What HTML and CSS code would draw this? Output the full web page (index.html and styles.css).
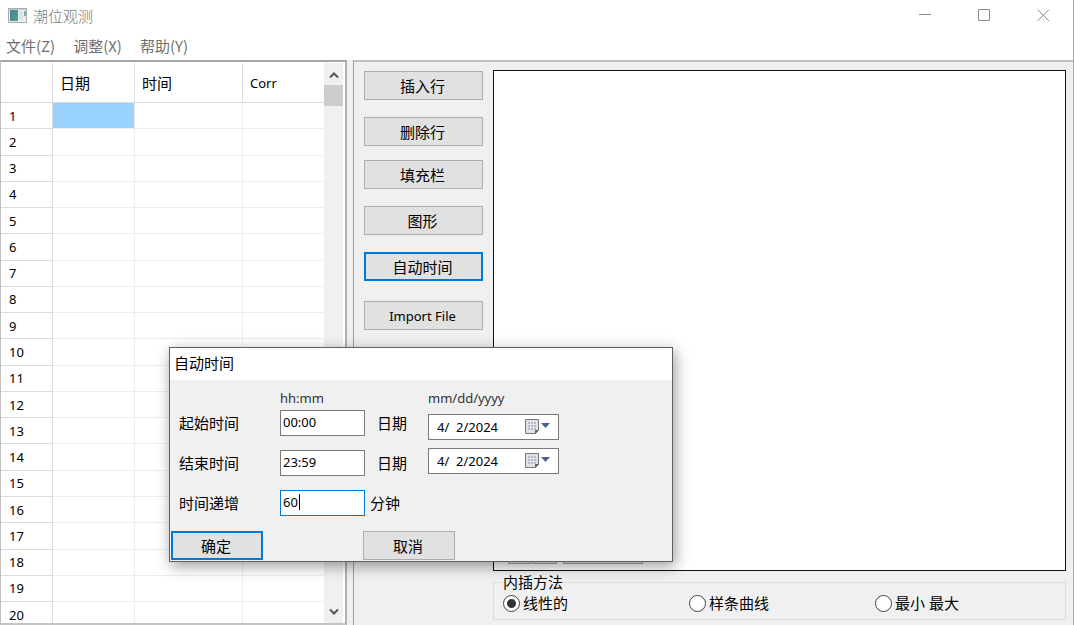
FILE: index.html
```html
<!DOCTYPE html>
<html lang="zh-CN">
<head>
<meta charset="utf-8">
<title>潮位观测</title>
<link rel="stylesheet" href="styles.css">
</head>
<body>
<div class="window">
  <header class="titlebar">
    <svg class="app-icon" width="19" height="15" viewBox="0 0 19 15">
      <defs><linearGradient id="g" x1="0" y1="0" x2="1" y2="1"><stop offset="0" stop-color="#4f79a0"/><stop offset="1" stop-color="#4fa583"/></linearGradient></defs>
      <rect x=".5" y=".5" width="18" height="14" fill="#e9eef2" stroke="#a9adb0"/>
      <rect x="1" y="1" width="17" height="1" fill="#c5ccd2"/>
      <rect x="2" y="2" width="8" height="11" fill="url(#g)"/>
      <rect x="11" y="3" width="4" height="9" fill="#dbe3ea"/>
      <rect x="16" y="3" width="2" height="5" fill="#7fae9c"/>
    </svg>
    <h1 class="app-title">潮位观测</h1>
    <div class="window-buttons">
      <button class="win-btn" aria-label="最小化"><svg width="13" height="13" viewBox="0 0 13 13"><path d="M0 5.500H12"/></svg></button>
      <button class="win-btn" aria-label="最大化"><svg width="13" height="13" viewBox="0 0 13 13"><path d="M.5 .5H11.500V11.500H.5Z"/></svg></button>
      <button class="win-btn" aria-label="关闭"><svg width="13" height="13" viewBox="0 0 13 13"><path d="M.5 .5L12 12M12 .5L.5 12"/></svg></button>
    </div>
  </header>
  <nav class="menubar">
    <button class="menu">文件(Z)</button>
    <button class="menu">调整(X)</button>
    <button class="menu">帮助(Y)</button>
  </nav>
  <main class="workspace">
    <section class="sheet">
      <div class="sheet-view">
        <table class="grid">
          <thead><tr><th class="num"></th><th class="date">日期</th><th class="time">时间</th><th class="corr">Corr</th></tr></thead>
          <tbody>
            <tr><th>1</th><td class="selected"></td><td></td><td></td></tr>
            <tr><th>2</th><td></td><td></td><td></td></tr>
            <tr><th>3</th><td></td><td></td><td></td></tr>
            <tr><th>4</th><td></td><td></td><td></td></tr>
            <tr><th>5</th><td></td><td></td><td></td></tr>
            <tr><th>6</th><td></td><td></td><td></td></tr>
            <tr><th>7</th><td></td><td></td><td></td></tr>
            <tr><th>8</th><td></td><td></td><td></td></tr>
            <tr><th>9</th><td></td><td></td><td></td></tr>
            <tr><th>10</th><td></td><td></td><td></td></tr>
            <tr><th>11</th><td></td><td></td><td></td></tr>
            <tr><th>12</th><td></td><td></td><td></td></tr>
            <tr><th>13</th><td></td><td></td><td></td></tr>
            <tr><th>14</th><td></td><td></td><td></td></tr>
            <tr><th>15</th><td></td><td></td><td></td></tr>
            <tr><th>16</th><td></td><td></td><td></td></tr>
            <tr><th>17</th><td></td><td></td><td></td></tr>
            <tr><th>18</th><td></td><td></td><td></td></tr>
            <tr><th>19</th><td></td><td></td><td></td></tr>
            <tr><th>20</th><td></td><td></td><td></td></tr>
          </tbody>
        </table>
      </div>
      <div class="scrollbar">
        <svg width="10" height="8" viewBox="0 0 10 8"><path d="M1 6.500L5 2.500L9 6.500"/></svg>
        <div class="thumb"></div>
        <svg width="10" height="8" viewBox="0 0 10 8"><path d="M1 1.500L5 5.500L9 1.500"/></svg>
      </div>
    </section>
    <section class="panel">
      <div class="actions">
        <button class="btn">插入行</button>
        <button class="btn">删除行</button>
        <button class="btn tight">填充栏</button>
        <button class="btn">图形</button>
        <button class="btn active">自动时间</button>
        <button class="btn loose">Import File</button>
      </div>
      <div class="chart-side">
        <div class="chart">
          <button class="btn step"></button>
          <button class="btn step"></button>
          <button class="btn wide"></button>
        </div>
        <fieldset class="method">
          <legend>内插方法</legend>
          <label><input type="radio" name="method" checked>线性的</label>
          <label><input type="radio" name="method">样条曲线</label>
          <label><input type="radio" name="method">最小 最大</label>
        </fieldset>
      </div>
    </section>
  </main>
</div>

<form class="dialog" role="dialog" aria-labelledby="dlg-title">
  <h2 class="dialog-title" id="dlg-title">自动时间</h2>
  <div class="fields">
    <div class="col names">
      <label for="start">起始时间</label>
      <label for="end">结束时间</label>
      <label for="inc">时间递增</label>
    </div>
    <div class="col times">
      <span class="hint">hh:mm</span>
      <input class="text" id="start" type="text" value="00:00">
      <input class="text" id="end" type="text" value="23:59">
      <div class="caret-box"><input class="text focused" id="inc" type="text" value="60"><span class="caret"></span></div>
    </div>
    <div class="col units">
      <label for="start-date">日期</label>
      <label for="end-date">日期</label>
      <span class="unit">分钟</span>
    </div>
    <div class="col dates">
      <span class="hint">mm/dd/yyyy</span>
      <div class="picker">
        <input id="start-date" type="text" value="4/  2/2024">
        <button class="drop" type="button" aria-label="选择日期"><svg width="28" height="18" viewBox="0 0 28 18"><path d="M1.500 1.500H14.500V12.500L11.500 15.500H1.500Z" fill="#e2e2e6" stroke="#77777c"/><path d="M4 4H12V12H4Z" fill="#b4b9c8"/><path d="M4 6.500H12M4 9.500H12M6.500 4V12M9.500 4V12" stroke="#e2e5ee"/><path d="M15 12H11V16Z" fill="#666"/><path d="M17 5H26L21.500 10Z" fill="#4c6089"/></svg></button>
      </div>
      <div class="picker">
        <input id="end-date" type="text" value="4/  2/2024">
        <button class="drop" type="button" aria-label="选择日期"><svg width="28" height="18" viewBox="0 0 28 18"><path d="M1.500 1.500H14.500V12.500L11.500 15.500H1.500Z" fill="#e2e2e6" stroke="#77777c"/><path d="M4 4H12V12H4Z" fill="#b4b9c8"/><path d="M4 6.500H12M4 9.500H12M6.500 4V12M9.500 4V12" stroke="#e2e5ee"/><path d="M15 12H11V16Z" fill="#666"/><path d="M17 5H26L21.500 10Z" fill="#4c6089"/></svg></button>
      </div>
    </div>
  </div>
  <div class="dialog-buttons">
    <button class="btn active" type="button">确定</button>
    <button class="btn" type="button">取消</button>
  </div>
</form>
</body>
</html>
```

FILE: styles.css
```css
* { box-sizing: border-box; }
body {
  margin: 0;
  font-family: "Noto Sans", "Noto Sans CJK SC", sans-serif;
  font-size: 15px;
  line-height: 20px;
  color: #000;
  background: #efefef;
}
button, input { font: inherit; color: inherit; margin: 0; padding: 0; }
h1, h2 { margin: 0; font-size: 15px; font-weight: 400; }

.window {
  display: flex;
  flex-direction: column;
  height: 100vh;
  overflow: hidden;
  border-right: 1px solid #a8a8a8;
}
.titlebar {
  display: flex;
  align-items: center;
  height: 31px;
  flex: none;
  padding-left: 8px;
  background: #fff;
}
.app-title { padding-left: 6px; color: #777; font-weight: 300; }
.window-buttons { display: flex; margin-left: auto; }
.win-btn {
  width: 59px;
  height: 31px;
  display: grid;
  place-items: center;
  border: 0;
  background: none;
}
.win-btn svg { fill: none; stroke: #8c8c8c; }

.menubar {
  display: flex;
  gap: 18px;
  height: 29px;
  flex: none;
  padding: 0 6px;
  background: #fff;
}
.menu {
  border: 0;
  background: none;
  color: #707070;
  font-family: "Noto Sans CJK SC", sans-serif;
}

.workspace { display: flex; flex: 1; min-height: 0; gap: 6px; background: #f0f0f0; }
.sheet {
  display: flex;
  width: 347px;
  padding: 1px 2px 0 0;
  flex: none;
  background: #fff;
  border: 1px solid #c0c0c0;
  border-top: 2px solid #a5a5a5;
  border-right: 2px solid #b0b0b0;
  border-bottom: 2px solid #c4c4c8;
}
.sheet-view { flex: 1; overflow: hidden; }
.grid {
  width: 100%;
  height: 101%;
  table-layout: fixed;
  border-collapse: separate;
  border-spacing: 0;
  font-size: 13px;
  line-height: 18px;
}
.grid th, .grid td {
  padding: 0;
  border-right: 1px solid #ededed;
  border-bottom: 1px solid #ededed;
  text-align: left;
  font-weight: 400;
}
.grid th { border-color: #dcdcdc; padding-left: 8px; }
.grid thead th { height: 40px; padding-left: 7px; }
.grid tr > :last-child { border-right: 0; }
.grid .num { width: 52px; }
.grid .date { width: 82px; font-size: 15px; }
.grid .time { width: 108px; font-size: 15px; }
.grid .selected { background: #99d1ff; }

.scrollbar {
  display: flex;
  flex-direction: column;
  align-items: center;
  width: 19px;
  padding: 8px 0 7px;
  background: #f0f0f0;
}
.scrollbar svg { flex: none; fill: none; stroke: #555; stroke-width: 2; }
.thumb { width: 19px; height: 21px; margin: 6px 0 auto; background: #cdcdcd; }

.panel {
  display: flex;
  flex: 1;
  gap: 10px;
  padding: 8px 7px 5px 10px;
  border-top: 2px solid #c0c0c0;
  border-left: 1px solid #a0a0a0;
}
.actions { display: flex; flex-direction: column; width: 119px; padding-top: 1px; gap: 17px; }
.btn {
  height: 29px;
  flex: none;
  padding-right: 2px;
  border: 1px solid #adadad;
  background: #e1e1e1;
  font-size: 15px;
}
.btn.active { border: 2px solid #0078d7; }
.btn.tight { margin-top: -3px; }
.btn.loose { margin-top: 3px; font-size: 13px; }

.chart-side { display: flex; flex: 1; flex-direction: column; gap: 1px; }
.chart {
  display: flex;
  flex: 1;
  align-items: flex-end;
  gap: 1px;
  padding: 6px 14px;
  border: 1px solid #111;
  background: #fff;
}
.chart .step { width: 24px; }
.chart .wide { width: 80px; margin-left: 5px; }

.method {
  display: grid;
  grid-template-columns: repeat(3, 1fr);
  margin: 0;
  padding: 0 4px 5px 9px;
  border: 1px solid #dcdcdc;
  min-width: 0;
}
.method legend { padding: 0; }
.method label { display: flex; align-items: center; gap: 3px; height: 22px; }
.method input {
  appearance: none;
  width: 17px;
  height: 17px;
  border: 1px solid #444;
  border-radius: 50%;
  background: #fff;
}
.method input:checked { background: radial-gradient(circle, #333 4px, #fff 5px); }

.dialog {
  position: absolute;
  left: 169px;
  top: 347px;
  width: 504px;
  border: 1px solid #606060;
  background: #f0f0f0;
  box-shadow: 2px 4px 14px rgba(0, 0, 0, 0.4);
}
.dialog-title { padding: 5px 4px 7px; background: #fff; font-size: 15px; }
.fields { display: flex; height: 149px; padding: 9px 9px 0; font-size: 13px; }
.col { display: flex; flex-direction: column; }
.names, .units { gap: 20px; padding-top: 24px; font-size: 15px; }
.names { width: 101px; }
.times { width: 85px; gap: 14px; }
.units { width: 63px; padding-left: 12px; }
.unit { margin-left: -7px; }
.dates { width: 131px; gap: 8px; }
.hint { height: 20px; line-height: 18px; color: #333; }
.times .hint { margin-bottom: -13px; }
.dates .hint { margin-bottom: -3px; }
.text {
  display: block;
  width: 100%;
  height: 26px;
  padding: 0 2px 2px;
  border: 1px solid #7a7a7a;
  background: #fff;
}
.text.focused { border-color: #0078d7; outline: 0; }
.caret-box { position: relative; }
.caret { position: absolute; left: 19px; top: 4px; width: 1px; height: 16px; background: #000; }
.picker {
  display: flex;
  align-items: center;
  height: 26px;
  padding: 0 6px 0 8px;
  border: 1px solid #7a7a7a;
  background: #fff;
}
.picker input { flex: 1; min-width: 0; border: 0; background: none; }
.drop { display: flex; border: 0; background: none; }
.dialog-buttons { display: flex; gap: 100px; padding: 2px 1px 1px; }
.dialog-buttons .btn { width: 92px; }
```
